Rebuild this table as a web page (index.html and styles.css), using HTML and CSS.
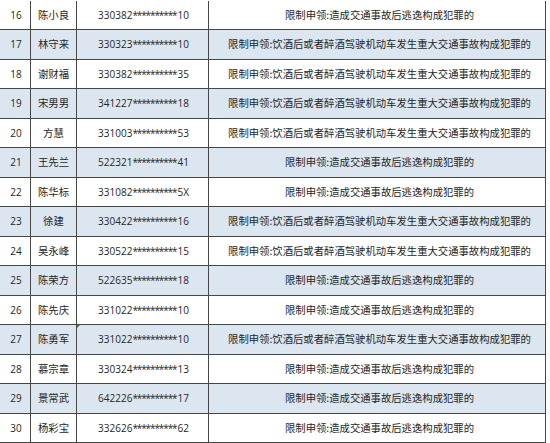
FILE: index.html
```html
<!DOCTYPE html>
<html lang="zh-CN">
<head>
<meta charset="utf-8">
<title>限制申领名单</title>
<link rel="stylesheet" href="styles.css">
</head>
<body>
<div class="sheet">
  <div class="row"><div class="c num">16</div><div class="c name">陈小良</div><div class="c id">330382<span class="mask">**********</span>10</div><div class="c reason">限制申领:造成交通事故后逃逸构成犯罪的</div></div>
  <div class="row alt"><div class="c num">17</div><div class="c name">林守来</div><div class="c id">330323<span class="mask">**********</span>10</div><div class="c reason">限制申领:饮酒后或者醉酒驾驶机动车发生重大交通事故构成犯罪的</div></div>
  <div class="row"><div class="c num">18</div><div class="c name">谢财福</div><div class="c id">330382<span class="mask">**********</span>35</div><div class="c reason">限制申领:饮酒后或者醉酒驾驶机动车发生重大交通事故构成犯罪的</div></div>
  <div class="row alt"><div class="c num">19</div><div class="c name">宋男男</div><div class="c id">341227<span class="mask">**********</span>18</div><div class="c reason">限制申领:饮酒后或者醉酒驾驶机动车发生重大交通事故构成犯罪的</div></div>
  <div class="row"><div class="c num">20</div><div class="c name">方慧</div><div class="c id">331003<span class="mask">**********</span>53</div><div class="c reason">限制申领:饮酒后或者醉酒驾驶机动车发生重大交通事故构成犯罪的</div></div>
  <div class="row alt"><div class="c num">21</div><div class="c name">王先兰</div><div class="c id">522321<span class="mask">**********</span>41</div><div class="c reason">限制申领:造成交通事故后逃逸构成犯罪的</div></div>
  <div class="row"><div class="c num">22</div><div class="c name">陈华标</div><div class="c id">331082<span class="mask">**********</span>5X</div><div class="c reason">限制申领:造成交通事故后逃逸构成犯罪的</div></div>
  <div class="row alt"><div class="c num">23</div><div class="c name">徐建</div><div class="c id">330422<span class="mask">**********</span>16</div><div class="c reason">限制申领:饮酒后或者醉酒驾驶机动车发生重大交通事故构成犯罪的</div></div>
  <div class="row"><div class="c num">24</div><div class="c name">吴永峰</div><div class="c id">330522<span class="mask">**********</span>15</div><div class="c reason">限制申领:饮酒后或者醉酒驾驶机动车发生重大交通事故构成犯罪的</div></div>
  <div class="row alt"><div class="c num">25</div><div class="c name">陈荣方</div><div class="c id">522635<span class="mask">**********</span>18</div><div class="c reason">限制申领:造成交通事故后逃逸构成犯罪的</div></div>
  <div class="row"><div class="c num">26</div><div class="c name">陈先庆</div><div class="c id">331022<span class="mask">**********</span>10</div><div class="c reason">限制申领:造成交通事故后逃逸构成犯罪的</div></div>
  <div class="row alt"><div class="c num">27</div><div class="c name">陈勇军</div><div class="c id flagged">331022<span class="mask">**********</span>10</div><div class="c reason">限制申领:饮酒后或者醉酒驾驶机动车发生重大交通事故构成犯罪的</div></div>
  <div class="row"><div class="c num">28</div><div class="c name">慕宗章</div><div class="c id">330324<span class="mask">**********</span>13</div><div class="c reason">限制申领:造成交通事故后逃逸构成犯罪的</div></div>
  <div class="row alt"><div class="c num">29</div><div class="c name">景常武</div><div class="c id">642226<span class="mask">**********</span>17</div><div class="c reason">限制申领:造成交通事故后逃逸构成犯罪的</div></div>
  <div class="row"><div class="c num">30</div><div class="c name">杨彩宝</div><div class="c id">332626<span class="mask">**********</span>62</div><div class="c reason">限制申领:造成交通事故后逃逸构成犯罪的</div></div>
</div>
</body>
</html>
```

FILE: styles.css
```css
html, body {
  margin: 0;
  padding: 0;
  background: #ffffff;
}

body {
  font-family: "Open Sans", "Noto Sans CJK SC", sans-serif;
  color: #262626;
  overflow: hidden;
}

.sheet {
  width: 546px;
  padding-top: 0.5px;
}

.row {
  display: grid;
  grid-template-columns: 31px 46px 132px 337px;
  height: 29.5px;
  box-sizing: border-box;
  background: #ffffff;
}

.row.alt {
  background: #dce6f1;
}

.c {
  display: flex;
  align-items: center;
  justify-content: center;
  border-right: 1px solid #474747;
  border-bottom: 1px solid #474747;
  box-sizing: border-box;
  white-space: nowrap;
  line-height: 1;
}

.num {
  font-size: 10px;
  padding-left: 2px;
}

.name {
  font-family: "Noto Sans CJK SC", sans-serif;
  font-size: 10.4px;
}

.id {
  font-size: 10px;
  position: relative;
  padding-left: 2px;
}

.mask {
  letter-spacing: -1.1px;
  margin-right: 1px;
}

.reason {
  font-family: "Noto Sans CJK SC", sans-serif;
  font-size: 10.35px;
  padding-left: 5px;
}

.flagged::before {
  content: "";
  position: absolute;
  left: 0;
  top: 0;
  width: 0;
  height: 0;
  border-top: 3px solid #1f8a3a;
  border-right: 3px solid transparent;
}
```
